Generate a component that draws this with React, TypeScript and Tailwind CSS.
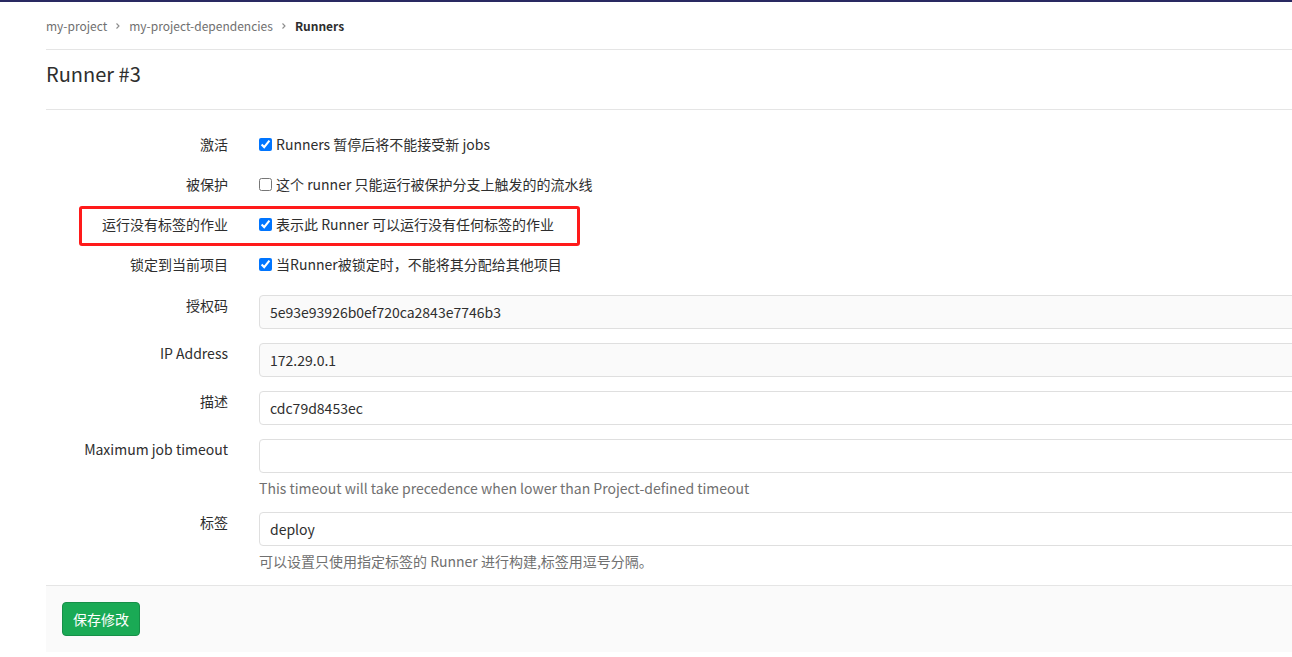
import { ReactNode } from 'react';

const font = { fontFamily: '"Noto Sans CJK SC", "Noto Sans", sans-serif' };

function CheckRow({ label, text, checked, last = false, children }: { label: string; text: string; checked: boolean; last?: boolean; children?: ReactNode }) {
  return (
    <div className={`relative flex h-[20px] items-center ${last ? 'mb-[21px]' : 'mb-[20px]'}`}>
      {children}
      <div className="w-[182px] text-right text-[#2e2e2e]">{label}</div>
      <div className="ml-[31px] flex items-center">
        <input type="checkbox" defaultChecked={checked} className="m-0 h-[13px] w-[13px]" />
        <span className="ml-[4px] text-[#2e2e2e]">{text}</span>
      </div>
    </div>
  );
}

function InputRow({ label, value, muted = false, help }: { label: string; value: string; muted?: boolean; help?: string }) {
  return (
    <div className="flex mb-[14px]">
      <div className="w-[182px] text-right leading-[20px] text-[#2e2e2e]">{label}</div>
      <div className="ml-[31px] flex-1">
        <div
          className={`flex h-[34px] items-center rounded-[4px] border border-[#dfdfdf] pl-[10px] text-[#2e2e2e] ${muted ? 'bg-[#fafafa]' : 'bg-white'}`}
        >
          {value}
        </div>
        {help && <p className="mt-[5px] -mb-[10px] leading-[20px] text-[#707070]">{help}</p>}
      </div>
    </div>
  );
}

function Chevron() {
  return (
    <svg className="mx-[7px]" width="8" height="8" viewBox="0 0 8 8">
      <path d="M2.5 1.5 L5 4 L2.5 6.5" fill="none" stroke="#8c8c8c" strokeWidth="1.1" />
    </svg>
  );
}

export default function App() {
  return (
    <div className="min-h-[657px] w-full overflow-hidden bg-white text-[14px]" style={font}>
      <div className="h-[2px] bg-[#292961]" />
      <div className="ml-[46px] w-[1300px]">
        <div className="flex h-[48px] items-center border-b border-[#e5e5e5] text-[12px]">
          <span className="text-[#707070]">my-project</span>
          <Chevron />
          <span className="text-[#707070]">my-project-dependencies</span>
          <Chevron />
          <span className="font-semibold text-[#2e2e2e]">Runners</span>
        </div>
        <div className="border-b border-[#e5e5e5] pb-[21px] pt-[10px]">
          <h3 className="text-[20px] leading-[28px] text-[#2e2e2e]">Runner #3</h3>
        </div>

        <form className="pt-[24px]">
          <CheckRow label="激活" text="Runners 暂停后将不能接受新 jobs" checked />
          <CheckRow label="被保护" text="这个 runner 只能运行被保护分支上触发的的流水线" checked={false} />
          <CheckRow label="运行没有标签的作业" text="表示此 Runner 可以运行没有任何标签的作业" checked>
            <div className="pointer-events-none absolute left-[33px] top-[-8px] h-[40px] w-[501px] rounded-[3px] border-[3px] border-[#ff1a1a]" />
          </CheckRow>
          <CheckRow label="锁定到当前项目" text="当Runner被锁定时，不能将其分配给其他项目" checked last />

          <InputRow label="授权码" value="5e93e93926b0ef720ca2843e7746b3" muted />
          <InputRow label="IP Address" value="172.29.0.1" muted />
          <InputRow label="描述" value="cdc79d8453ec" />
          <InputRow label="Maximum job timeout" value="" help="This timeout will take precedence when lower than Project-defined timeout" />
          <div className="h-[10px]" />
          <InputRow label="标签" value="deploy" help="可以设置只使用指定标签的 Runner 进行构建,标签用逗号分隔。" />
          <div className="h-[10px]" />

          <div className="border-t border-[#e5e5e5] bg-[#fafafa] px-[16px] py-[16px]">
            <button
              type="button"
              className="h-[34px] rounded-[4px] border border-[#168f48] bg-[#1aaa55] px-[10px] text-[14px] text-white"
            >
              保存修改
            </button>
          </div>
        </form>
      </div>
    </div>
  );
}
